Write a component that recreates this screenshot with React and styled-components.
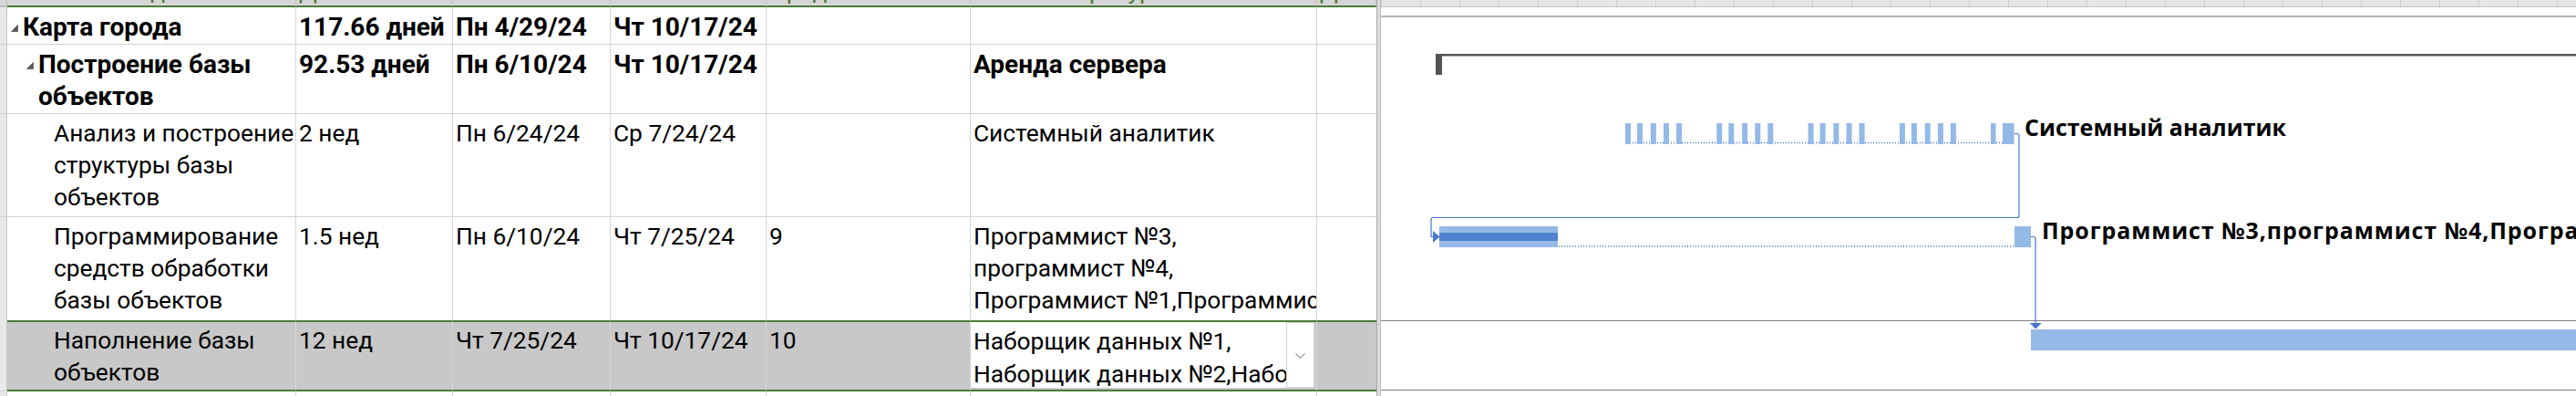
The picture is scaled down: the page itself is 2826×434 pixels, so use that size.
import React from "react";
import styled, { createGlobalStyle, css } from "styled-components";

const GlobalStyle = createGlobalStyle`
  *, *::before, *::after { box-sizing: border-box; }
  html, body { margin: 0; padding: 0; background: #ffffff; }
  body { font-family: Roboto, "Liberation Sans", sans-serif; color: #000; }
  #root { width: 2826px; height: 434px; }
`;

const COLS = "8px 317px 172px 173px 171px 224px 380px 65px";
const GRID = "#d4d4d4";
const GREEN = "#4a7b37";
const SEL_BG = "#c8c8c8";
const BAR = "#95b9e7";
const BAR_DARK = "#4f82cf";
const LINK = "#4677c8";

const Screen = styled.div`
  display: flex;
  width: 2826px;
  height: 434px;
  overflow: hidden;
  background: #fff;
`;

const TablePane = styled.div`
  flex: none;
  width: 1510px;
  display: flex;
  flex-direction: column;
  overflow: hidden;
`;

const HeaderRow = styled.div`
  flex: none;
  display: grid;
  grid-template-columns: ${COLS};
  height: 8px;
`;

const HeaderCell = styled.div`
  display: flex;
  align-items: flex-end;
  height: 8px;
  padding-left: 3px;
  overflow: hidden;
  background: #d6d6d6;
  border-right: 1px solid #c2c2c2;
  border-bottom: 2px solid ${(p) => (p.$strip ? "#bdbdbd" : GREEN)};
`;

const HeaderLabel = styled.span`
  font-size: 26.3px;
  line-height: 30px;
  margin-bottom: 1px;
  color: ${GREEN};
  white-space: nowrap;
`;

const Row = styled.div`
  flex: none;
  display: grid;
  grid-template-columns: ${COLS};
  height: ${(p) => p.$h}px;
`;

const FillerRow = styled.div`
  flex: 1;
  display: grid;
  grid-template-columns: ${COLS};
`;

const StripCell = styled.div`
  background: #e8e8e8;
  border-right: 1px solid #c6c6c6;
  border-bottom: ${(p) => (p.$open ? "none" : "1px solid #d0d0d0")};
`;

const Cell = styled.div`
  overflow: hidden;
  padding: 4px 3px 0 3px;
  font-size: ${(p) => (p.$bold ? "28px" : "26.3px")};
  font-weight: ${(p) => (p.$bold ? 700 : 400)};
  line-height: 35px;
  background: #fff;
  border-right: ${(p) => (p.$last ? "none" : `1px solid ${GRID}`)};
  border-bottom: ${(p) => (p.$open ? "none" : `1px solid ${GRID}`)};
  ${(p) =>
    p.$selected &&
    css`
      background: ${SEL_BG};
      padding-top: 3px;
      border-top: 2px solid ${GREEN};
      border-bottom: 2px solid ${GREEN};
    `}
  ${(p) =>
    p.$editor &&
    css`
      display: flex;
      padding: 0;
    `}
`;

const Line = styled.span`
  display: block;
  white-space: nowrap;
`;

const NameWrap = styled.div`
  display: flex;
  align-items: flex-start;
  padding-left: ${(p) => p.$level * 17}px;
`;

const Toggle = styled.span`
  flex: none;
  width: 14px;
  height: 35px;
  display: flex;
  align-items: flex-start;
  padding-top: 15px;
  padding-left: 1px;
`;

const Editor = styled.div`
  flex: 1;
  display: flex;
  background: #fff;
  margin: 0 2px 2px 0;
  min-width: 0;
`;

const EditorText = styled.div`
  flex: 1;
  min-width: 0;
  overflow: hidden;
  padding: 3px 0 0 3px;
  font-size: 26.3px;
  line-height: 36px;
`;

const DropButton = styled.div`
  flex: none;
  width: 31px;
  display: flex;
  justify-content: center;
  padding-top: 33px;
  border: 1px solid #d6d6d6;
  background: #fff;
`;

const Splitter = styled.div`
  flex: none;
  width: 5px;
  background: #dcdcdc;
  border-left: 1px solid #a9a9a9;
  border-right: 1px solid #bbbbbb;
`;

const GanttPane = styled.div`
  flex: 1;
  display: flex;
  flex-direction: column;
  min-width: 0;
  overflow: hidden;
`;

const TierTop = styled.div`
  flex: none;
  height: 8px;
  background-color: #e6e6e6;
  background-image: linear-gradient(to right, transparent 42px, #cfcfcf 42px);
  background-size: 43px 100%;
  background-position: 1px 0;
  border-bottom: 1px solid #c4c4c4;
`;

const TierBottom = styled.div`
  flex: none;
  height: 11px;
  background: #fff;
  border-bottom: 2px solid #b4b4b4;
`;

const Canvas = styled.div`
  flex: 1;
  position: relative;
  overflow: hidden;
`;

const ChartSvg = styled.svg`
  display: block;
`;

const BarLabel = styled.span`
  position: absolute;
  left: ${(p) => p.$x}px;
  top: ${(p) => p.$y}px;
  font-family: "Open Sans", Roboto, sans-serif;
  font-weight: 700;
  font-size: 25px;
  line-height: 30px;
  letter-spacing: ${(p) => p.$spacing || 0}px;
  white-space: nowrap;
  color: #000;
`;

const headers = [
  "Название задачи",
  "Длительность",
  "Начало",
  "Окончание",
  "Предшественники",
  "Названия ресурсов",
  "Добавить новый столбец",
];

const rows = [
  {
    id: 1, h: 41, level: 0, summary: true,
    name: ["Карта города"], dur: "117.66 дней", start: "Пн 4/29/24", finish: "Чт 10/17/24", pred: "", res: [],
  },
  {
    id: 2, h: 76, level: 1, summary: true,
    name: ["Построение базы", "объектов"], dur: "92.53 дней", start: "Пн 6/10/24", finish: "Чт 10/17/24", pred: "",
    res: ["Аренда сервера"],
  },
  {
    id: 3, h: 113, level: 2,
    name: ["Анализ и построение", "структуры базы", "объектов"], dur: "2 нед", start: "Пн 6/24/24", finish: "Ср 7/24/24", pred: "",
    res: ["Системный аналитик"],
  },
  {
    id: 4, h: 113, level: 2, open: true,
    name: ["Программирование", "средств обработки", "базы объектов"], dur: "1.5 нед", start: "Пн 6/10/24", finish: "Чт 7/25/24", pred: "9",
    res: ["Программист №3,", "программист №4,", "Программист №1,Программист №2"],
  },
  {
    id: 5, h: 78, level: 2, selected: true,
    name: ["Наполнение базы", "объектов"], dur: "12 нед", start: "Чт 7/25/24", finish: "Чт 10/17/24", pred: "10",
    res: ["Наборщик данных №1,", "Наборщик данных №2,Наборщик данных №3"],
  },
];

const Lines = ({ items }) => items.map((t, i) => <Line key={i}>{t}</Line>);

const ToggleIcon = () => (
  <svg width="8" height="8" viewBox="0 0 8 8">
    <polygon points="7.5,0.5 7.5,7.5 0.5,7.5" fill="#5a5a5a" stroke="#3c3c3c" strokeWidth="0.6" />
  </svg>
);

const Chevron = () => (
  <svg width="11" height="7" viewBox="0 0 11 7">
    <polyline points="0.5,0.5 5.5,5.5 10.5,0.5" fill="none" stroke="#6a6a6a" strokeWidth="1" />
  </svg>
);

function TaskRow({ r }) {
  const common = { $bold: r.summary, $selected: r.selected, $open: r.open };
  return (
    <Row $h={r.h}>
      <StripCell $open={r.open} />
      <Cell {...common}>
        <NameWrap $level={r.level}>
          <Toggle>{r.summary && <ToggleIcon />}</Toggle>
          <div>
            <Lines items={r.name} />
          </div>
        </NameWrap>
      </Cell>
      <Cell {...common}><Line>{r.dur}</Line></Cell>
      <Cell {...common}><Line>{r.start}</Line></Cell>
      <Cell {...common}><Line>{r.finish}</Line></Cell>
      <Cell {...common} $bold={false}><Line>{r.pred}</Line></Cell>
      {r.selected ? (
        <Cell {...common} $editor>
          <Editor>
            <EditorText>
              <Lines items={r.res} />
            </EditorText>
            <DropButton>
              <Chevron />
            </DropButton>
          </Editor>
        </Cell>
      ) : (
        <Cell {...common}>
          <Lines items={r.res} />
        </Cell>
      )}
      <Cell {...common} $last />
    </Row>
  );
}

/* ---------- Gantt drawing (page coordinates, shifted by origin) ---------- */
const OX = 1515;
const OY = 19;

const splitSegments = (() => {
  const segs = [];
  const offsets = [0, 13, 27.8, 42, 56];
  for (let w = 0; w < 4; w++) {
    const ws = 1783 + 100.3 * w;
    offsets.forEach((o) => segs.push([ws + o, 6]));
  }
  segs.push([2184, 5.5]);
  segs.push([2197, 12.5]);
  return segs;
})();

function GanttChart() {
  return (
    <ChartSvg width="1311" height="415" viewBox="0 0 1311 415">
      <g transform={`translate(${-OX} ${-OY})`}>
        {/* selected row outline */}
        <rect x={OX} y={351} width={1311} height={1} fill="#7f7f7f" />
        <rect x={OX} y={427} width={1311} height={1} fill="#7f7f7f" />

        {/* summary bar */}
        <rect x={1575} y={59} width={1251} height={2.5} fill="#545454" />
        <rect x={1575} y={59} width={7} height={23} fill="#545454" />

        {/* split task: Анализ */}
        <line x1={1788} y1={156.5} x2={2197} y2={156.5} stroke={LINK} strokeWidth="1.4" strokeDasharray="1 2" />
        {splitSegments.map(([x, w], i) => (
          <rect key={i} x={x} y={135} width={w} height={23} fill={BAR} />
        ))}

        {/* link Анализ -> Программирование */}
        <path
          d="M2209.5 146.5 H2213 Q2215 146.5 2215 148.5 V236.5 Q2215 238.5 2213 238.5 H1572 Q1570 238.5 1570 240.5 V259.5 H1573"
          fill="none"
          stroke={LINK}
          strokeWidth="1.2"
        />
        <polygon points="1572,253 1579.5,259.5 1572,266" fill={LINK} />

        {/* Программирование */}
        <rect x={1579} y={248} width={130} height={23} fill={BAR} />
        <rect x={1579} y={255} width={130} height={9} fill={BAR_DARK} />
        <line x1={1710} y1={270} x2={2210} y2={270} stroke={LINK} strokeWidth="1.4" strokeDasharray="1 2" />
        <rect x={2210} y={248} width={18} height={23} fill={BAR} />

        {/* link Программирование -> Наполнение */}
        <path
          d="M2228 259.5 H2231 Q2233 259.5 2233 261.5 V354"
          fill="none"
          stroke={LINK}
          strokeWidth="1.2"
        />
        <polygon points="2226.8,354 2239.6,354 2233.2,360.5" fill={LINK} />

        {/* Наполнение */}
        <rect x={2228} y={361} width={598} height={23} fill={BAR} />
      </g>
    </ChartSvg>
  );
}

export default function App() {
  return (
    <>
      <GlobalStyle />
      <Screen>
        <TablePane>
          <HeaderRow>
            <HeaderCell $strip />
            {headers.map((h) => (
              <HeaderCell key={h}>
                <HeaderLabel>{h}</HeaderLabel>
              </HeaderCell>
            ))}
          </HeaderRow>
          {rows.map((r) => (
            <TaskRow key={r.id} r={r} />
          ))}
          <FillerRow>
            <StripCell $open />
            {headers.map((h, i) => (
              <Cell key={h} $open $last={i === headers.length - 1} />
            ))}
          </FillerRow>
        </TablePane>
        <Splitter />
        <GanttPane>
          <TierTop />
          <TierBottom />
          <Canvas>
            <GanttChart />
            <BarLabel $x={2221 - OX} $y={124 - OY}>Системный аналитик</BarLabel>
            <BarLabel $x={2240 - OX} $y={237 - OY} $spacing={0.9}>
              Программист №3,программист №4,Программист №1,Программист №2
            </BarLabel>
          </Canvas>
        </GanttPane>
      </Screen>
    </>
  );
}
